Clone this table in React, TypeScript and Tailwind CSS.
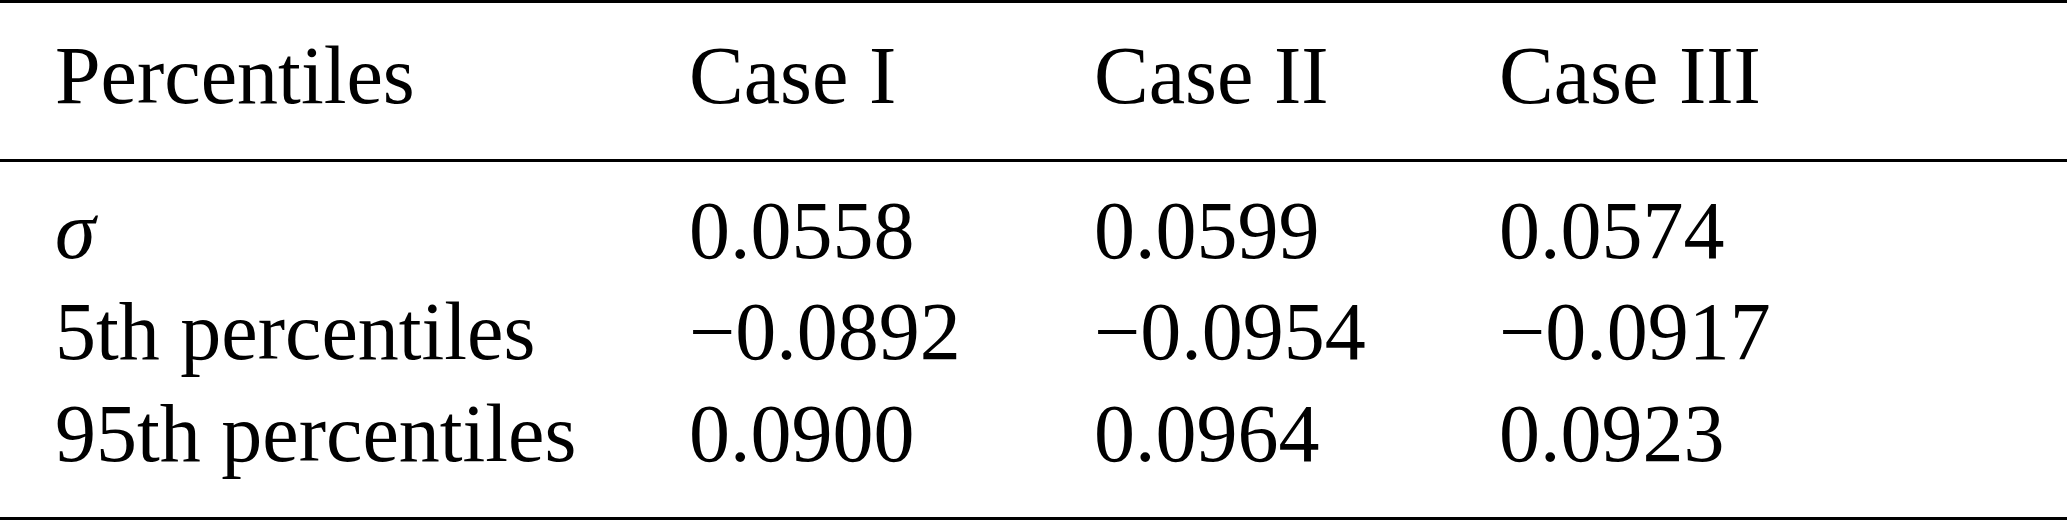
const header = ["Percentiles", "Case I", "Case II", "Case III"];

const rows = [
  { label: "σ", italic: true, values: ["0.0558", "0.0599", "0.0574"] },
  { label: "5th percentiles", italic: false, values: ["−0.0892", "−0.0954", "−0.0917"] },
  { label: "95th percentiles", italic: false, values: ["0.0900", "0.0964", "0.0923"] },
];

const cols = "grid grid-cols-[634px_405px_405px_1fr] pl-[55px]";

export default function App() {
  return (
    <div className="w-[2067px] h-[521px] bg-white text-black font-['Liberation_Serif','Times_New_Roman',serif] text-[82px] leading-[101.5px]">
      <div className="border-t-[3px] border-b-[3px] border-black">
        {/* header */}
        <div className={`${cols} pt-[22px] pb-[32px] border-b-[3px] border-black`}>
          {header.map((h) => (
            <div key={h} className="whitespace-nowrap">
              {h}
            </div>
          ))}
        </div>

        {/* body */}
        <div className="pt-[18px] pb-[33px]">
          {rows.map((row) => (
            <div key={row.label} className={cols}>
              <div className={row.italic ? "italic whitespace-nowrap" : "whitespace-nowrap"}>
                {row.label}
              </div>
              {row.values.map((v, i) => (
                <div key={i} className="whitespace-nowrap">
                  {v}
                </div>
              ))}
            </div>
          ))}
        </div>
      </div>
    </div>
  );
}
